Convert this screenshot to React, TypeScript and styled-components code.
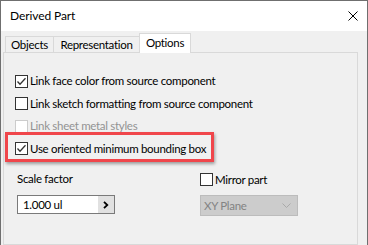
import styled, { createGlobalStyle } from "styled-components";

const GlobalStyle = createGlobalStyle`
  html, body {
    margin: 0;
    padding: 0;
    background: #f0f0f0;
  }
  body {
    font-family: Lato, "Noto Sans", "Liberation Sans", sans-serif;
    font-size: 11.5px;
    letter-spacing: -0.3px;
    color: #000;
  }
  * {
    box-sizing: border-box;
  }
`;

// dialog frame
const Window = styled.div`
  width: 368px;
  height: 245px;
  overflow: hidden;
  border: 1px solid #6f6f6f;
  border-bottom: none;
  background: #f0f0f0;
  display: flex;
  flex-direction: column;
`;
const TitleBar = styled.div`
  height: 30px;
  flex-shrink: 0;
  background: #fff;
  display: flex;
  align-items: center;
  justify-content: space-between;
  padding: 0 9px 0 9px;
  span {
    line-height: 16px;
    font-size: 12px;
    letter-spacing: -0.1px;
  }
  svg {
    display: block;
  }
`;

// tabs
const TabStrip = styled.div`
  height: 21px;
  flex-shrink: 0;
  display: flex;
  align-items: flex-end;
  padding: 2px 0 0 4px;
`;
const Tab = styled.div<{ $w: number; $active?: boolean }>`
  width: ${(p) => p.$w}px;
  height: ${(p) => (p.$active ? 20 : 16)}px;
  margin-bottom: ${(p) => (p.$active ? -1 : 0)}px;
  margin-left: -1px;
  &:first-child {
    margin-left: 0;
  }
  position: relative;
  z-index: ${(p) => (p.$active ? 1 : 0)};
  border: 1px solid #d9d9d9;
  border-bottom: none;
  background: ${(p) => (p.$active ? "#fff" : "#f0f0f0")};
  display: flex;
  align-items: ${(p) => (p.$active ? "flex-start" : "center")};
  padding-top: ${(p) => (p.$active ? 1 : 0)}px;
  justify-content: center;
  line-height: 15px;
  white-space: nowrap;
`;

// options page
const Panel = styled.div`
  flex: 1;
  margin: 0 9px 0 2px;
  border: 1px solid #d9d9d9;
  background: #f0f0f0;
  padding: 17px 0 0 11px;
`;
const CheckRow = styled.div<{ $h?: number }>`
  position: relative;
  height: ${(p) => p.$h ?? 22.5}px;
  display: flex;
  align-items: center;
  gap: 2px;
`;
const Box = styled.div<{ $disabled?: boolean }>`
  width: 13px;
  height: 13px;
  flex-shrink: 0;
  border: 1px solid ${(p) => (p.$disabled ? "#cccccc" : "#333")};
  background: #fff;
  svg {
    display: block;
  }
`;
const Label = styled.span<{ $disabled?: boolean }>`
  color: ${(p) => (p.$disabled ? "#939393" : "#000")};
  line-height: 16px;
  white-space: nowrap;
`;
const Highlight = styled.div`
  position: absolute;
  top: -5.5px;
  left: -10px;
  width: 209px;
  height: 30px;
  border: 3px solid #f0464b;
  box-shadow: 1px 2px 3px rgba(0, 0, 0, 0.35);
  pointer-events: none;
`;

const BottomGrid = styled.div`
  display: grid;
  grid-template-columns: 183px auto;
  padding-left: 2px;
  margin-top: 10px;
`;
const Column = styled.div`
  display: flex;
  flex-direction: column;
`;
const FieldLabel = styled.span`
  line-height: 16px;
  margin-top: 1px;
  margin-bottom: 8px;
`;
const NumberInput = styled.div`
  width: 98px;
  height: 19px;
  border: 1px solid #7a7a7a;
  background: #fff;
  display: flex;
  span {
    flex: 1;
    padding-left: 5px;
    line-height: 17px;
  }
`;
const SpinButton = styled.div`
  width: 16px;
  background: #e1e1e1;
  display: flex;
  align-items: center;
  justify-content: center;
`;
const Select = styled.div`
  margin-top: 6px;
  width: 98px;
  height: 21px;
  border: 1px solid #bcbcbc;
  background: #cccccc;
  color: #838383;
  display: flex;
  align-items: center;
  justify-content: space-between;
  padding: 0 6px 0 3px;
  line-height: 16px;
`;

function CheckMark() {
  return (
    <svg width="11" height="11" viewBox="0 0 11 11">
      <polyline
        points="1.5,5.5 4,8.2 9.5,2.2"
        fill="none"
        stroke="#333"
        strokeWidth="1.3"
      />
    </svg>
  );
}

function Check({ checked, disabled }: { checked?: boolean; disabled?: boolean }) {
  return <Box $disabled={disabled}>{checked && <CheckMark />}</Box>;
}

export default function App() {
  return (
    <>
      <GlobalStyle />
      <Window>
        <TitleBar>
          <span>Derived Part</span>
          <svg width="10" height="10" viewBox="0 0 10 10">
            <path d="M0.5 0.5 L9.5 9.5 M9.5 0.5 L0.5 9.5" stroke="#000" strokeWidth="1" />
          </svg>
        </TitleBar>
        <TabStrip>
          <Tab $w={49}>Objects</Tab>
          <Tab $w={87}>Representation</Tab>
          <Tab $w={52} $active>
            Options
          </Tab>
        </TabStrip>
        <Panel>
          <CheckRow>
            <Check checked />
            <Label>Link face color from source component</Label>
          </CheckRow>
          <CheckRow>
            <Check />
            <Label>Link sketch formatting from source component</Label>
          </CheckRow>
          <CheckRow>
            <Check disabled />
            <Label $disabled>Link sheet metal styles</Label>
          </CheckRow>
          <CheckRow>
            <Check checked />
            <Label>Use oriented minimum bounding box</Label>
            <Highlight />
          </CheckRow>
          <BottomGrid>
            <Column>
              <FieldLabel>Scale factor</FieldLabel>
              <NumberInput>
                <span>1.000 ul</span>
                <SpinButton>
                  <svg width="6" height="8" viewBox="0 0 6 8">
                    <path d="M1 0.8 L4.3 4 L1 7.2" fill="none" stroke="#000" strokeWidth="1.8" />
                  </svg>
                </SpinButton>
              </NumberInput>
            </Column>
            <Column>
              <CheckRow $h={19}>
                <Check />
                <Label>Mirror part</Label>
              </CheckRow>
              <Select>
                <span>XY Plane</span>
                <svg width="9" height="5" viewBox="0 0 9 5">
                  <path d="M0.5 0.5 L4.5 4.5 L8.5 0.5" fill="none" stroke="#a9a9a9" strokeWidth="1" />
                </svg>
              </Select>
            </Column>
          </BottomGrid>
        </Panel>
      </Window>
    </>
  );
}
